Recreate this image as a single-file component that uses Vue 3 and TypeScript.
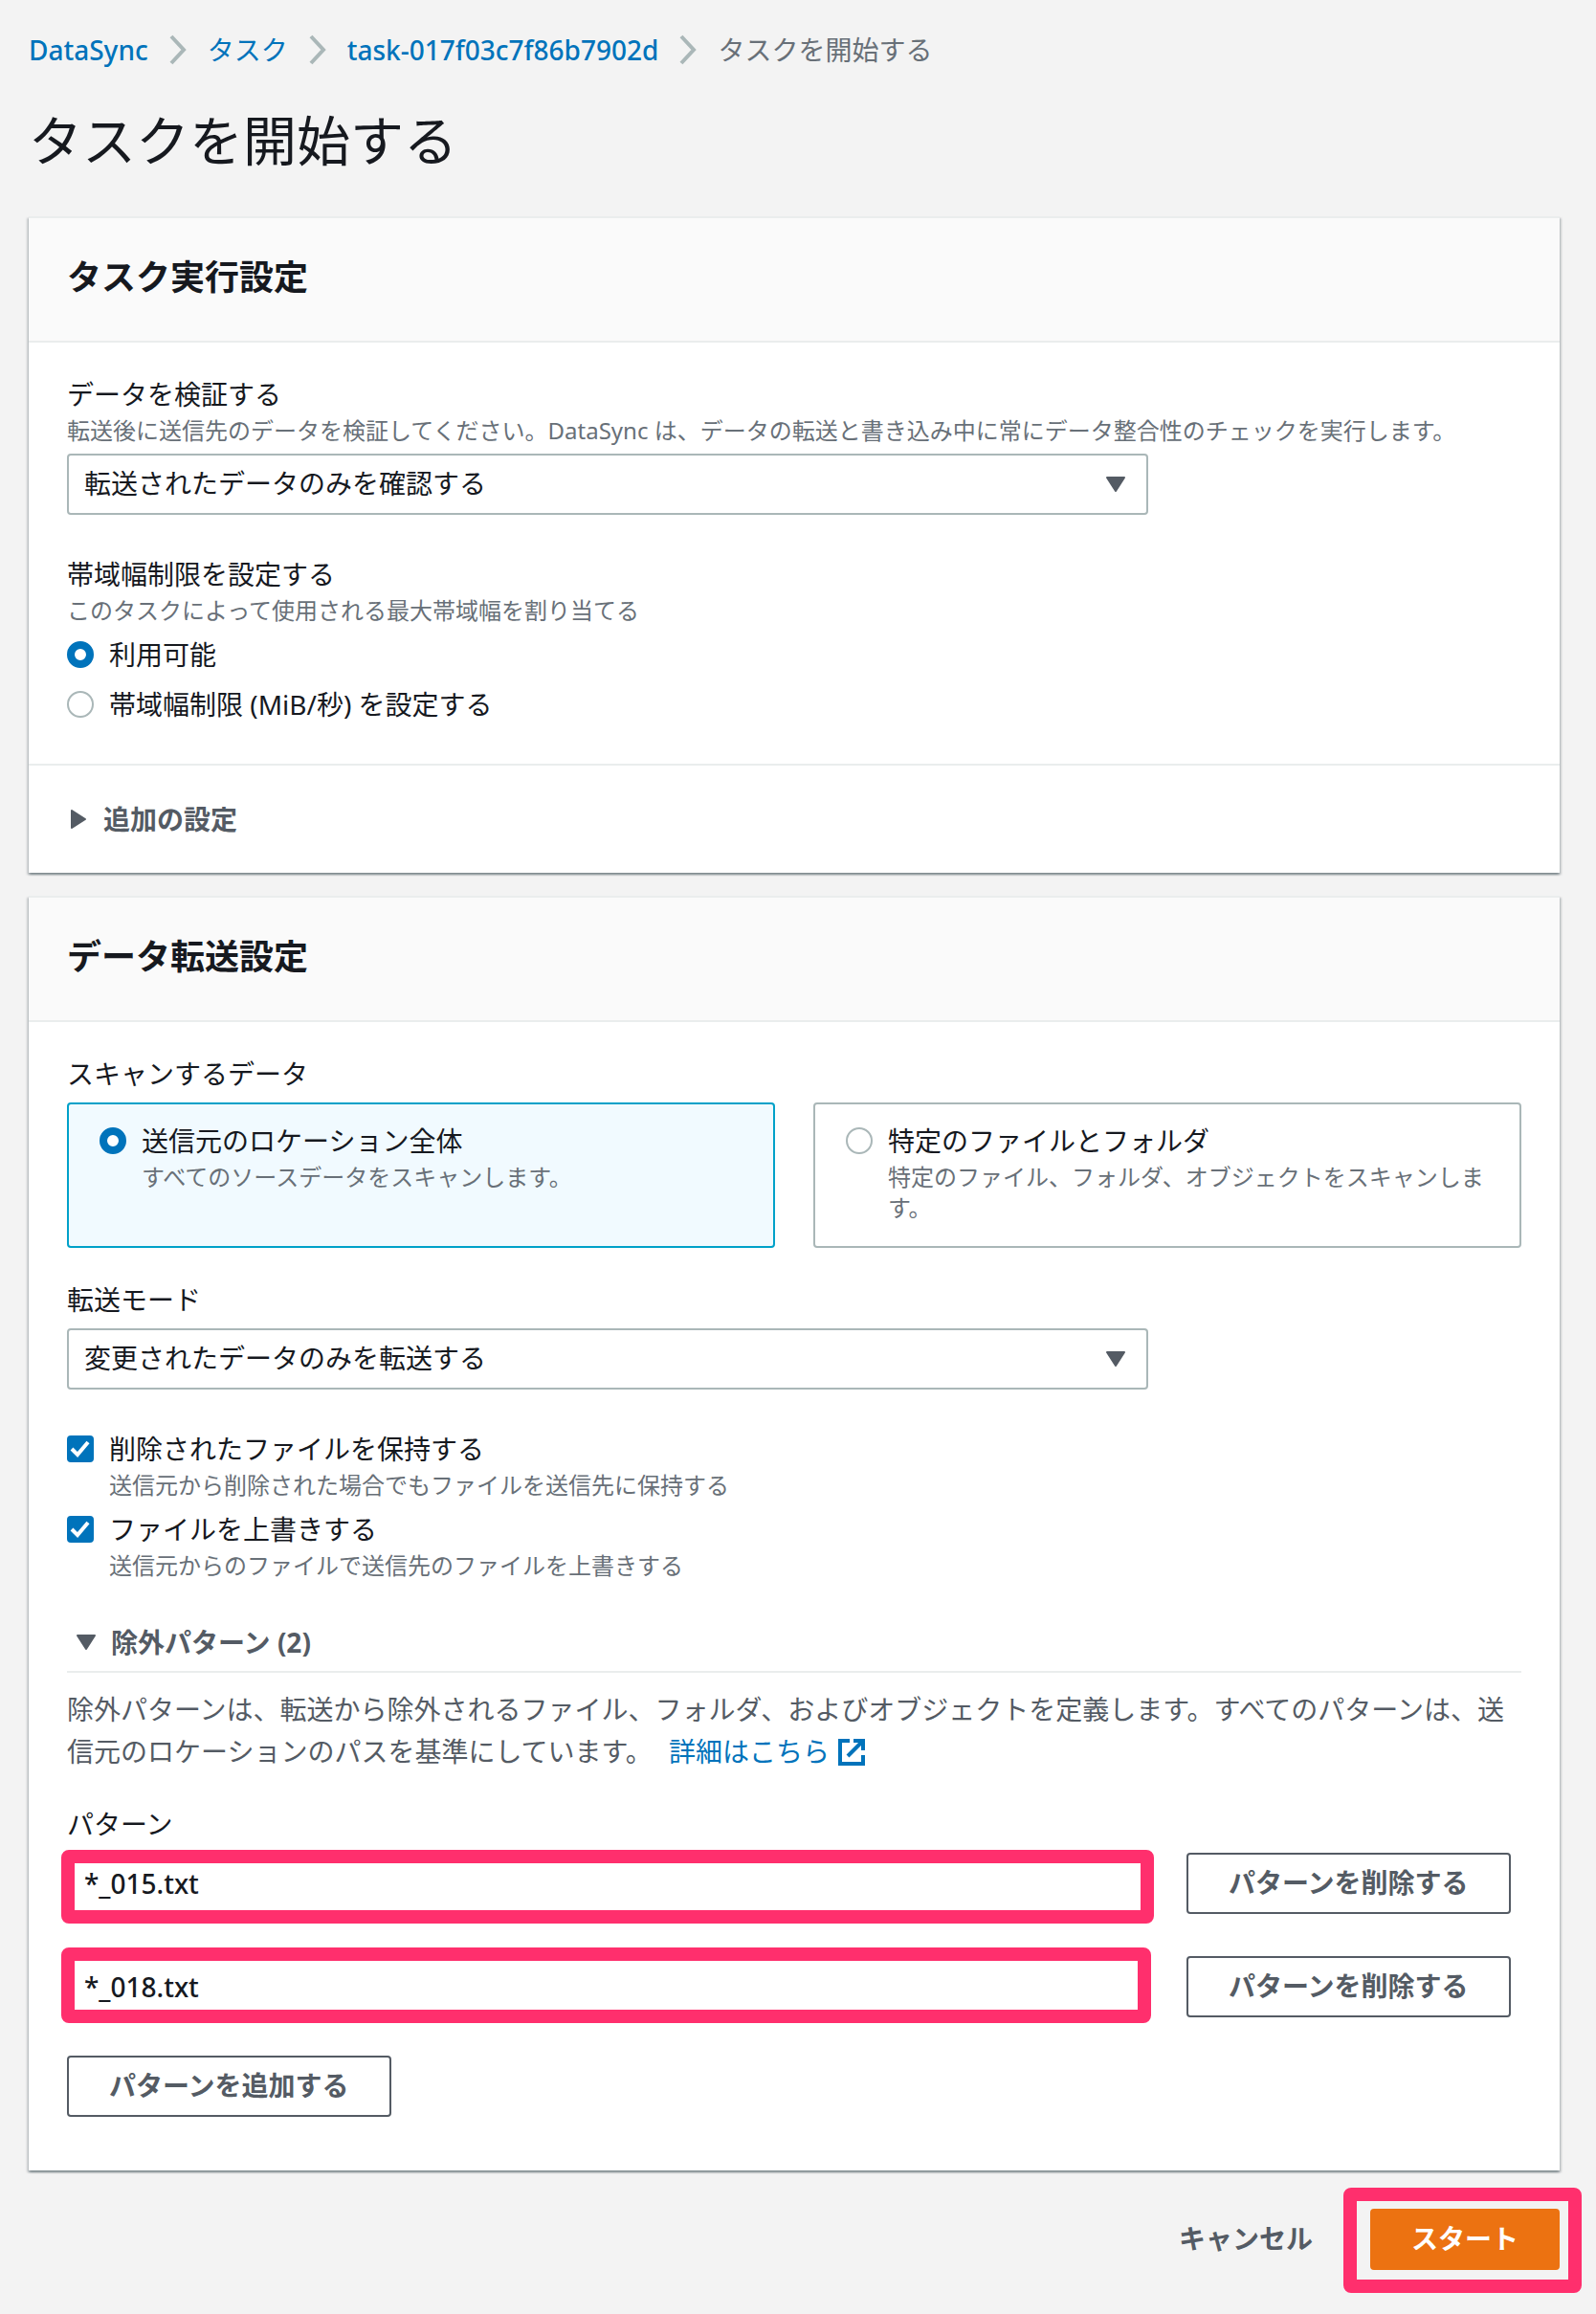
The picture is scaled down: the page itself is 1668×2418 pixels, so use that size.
<script setup lang="ts">
import { ref } from 'vue'

interface Crumb {
  label: string
  href?: string
}

interface ScanOption {
  value: string
  title: string
  description: string
}

interface CheckOption {
  id: string
  title: string
  description: string
  checked: boolean
}

interface Pattern {
  id: number
  value: string
}

const crumbs: Crumb[] = [
  { label: 'DataSync', href: '#datasync' },
  { label: 'タスク', href: '#tasks' },
  { label: 'task-017f03c7f86b7902d', href: '#task' },
  { label: 'タスクを開始する' },
]

const verifyMode = ref('transferred')
const bandwidth = ref('available')
const scanTarget = ref('all')
const transferMode = ref('changed')

const scanOptions: ScanOption[] = [
  {
    value: 'all',
    title: '送信元のロケーション全体',
    description: 'すべてのソースデータをスキャンします。',
  },
  {
    value: 'specific',
    title: '特定のファイルとフォルダ',
    description: '特定のファイル、フォルダ、オブジェクトをスキャンします。',
  },
]

const checks = ref<CheckOption[]>([
  {
    id: 'keep-deleted',
    title: '削除されたファイルを保持する',
    description: '送信元から削除された場合でもファイルを送信先に保持する',
    checked: true,
  },
  {
    id: 'overwrite',
    title: 'ファイルを上書きする',
    description: '送信元からのファイルで送信先のファイルを上書きする',
    checked: true,
  },
])

const patterns = ref<Pattern[]>([
  { id: 1, value: '*_015.txt' },
  { id: 2, value: '*_018.txt' },
])

let nextId = 3

function addPattern(): void {
  patterns.value.push({ id: nextId++, value: '' })
}

function removePattern(id: number): void {
  patterns.value = patterns.value.filter((p) => p.id !== id)
}
</script>

<template>
  <main class="page">
    <nav aria-label="パンくずリスト">
      <ol class="crumbs">
        <li v-for="(crumb, i) in crumbs" :key="crumb.label" class="crumb">
          <svg v-if="i > 0" class="chevron" viewBox="0 0 18 32" aria-hidden="true">
            <path d="M2 2 L15 16 L2 30" fill="none" stroke="#aab7b8" stroke-width="4" />
          </svg>
          <a v-if="crumb.href" :href="crumb.href">{{ crumb.label }}</a>
          <span v-else>{{ crumb.label }}</span>
        </li>
      </ol>
    </nav>

    <h1>タスクを開始する</h1>

    <section class="card">
      <header class="card-header"><h2>タスク実行設定</h2></header>
      <div class="card-body">
        <div class="field-grid">
          <label class="label wide" for="verify">データを検証する</label>
          <p class="hint wide">
            転送後に送信先のデータを検証してください。DataSync は、データの転送と書き込み中に常にデータ整合性のチェックを実行します。
          </p>
          <div class="select">
            <select id="verify" v-model="verifyMode">
              <option value="transferred">転送されたデータのみを確認する</option>
            </select>
            <svg class="arrow" viewBox="0 0 20 16" aria-hidden="true">
              <path d="M1 1 H19 L10 15 Z" fill="#545b64" stroke="#545b64" stroke-width="2" stroke-linejoin="round" />
            </svg>
          </div>
        </div>

        <fieldset class="group">
          <legend class="label">帯域幅制限を設定する</legend>
          <p class="hint">このタスクによって使用される最大帯域幅を割り当てる</p>
          <label class="choice">
            <input v-model="bandwidth" type="radio" name="bandwidth" value="available" />
            <span>利用可能</span>
          </label>
          <label class="choice">
            <input v-model="bandwidth" type="radio" name="bandwidth" value="limit" />
            <span>帯域幅制限 (MiB/秒) を設定する</span>
          </label>
        </fieldset>
      </div>
      <div class="card-footer">
        <button type="button" class="expander" aria-expanded="false">
          <svg class="side-arrow" viewBox="0 0 16 20" aria-hidden="true">
            <path d="M1 1 V19 L15 10 Z" fill="#545b64" stroke="#545b64" stroke-width="2" stroke-linejoin="round" />
          </svg>
          追加の設定
        </button>
      </div>
    </section>

    <section class="card">
      <header class="card-header"><h2>データ転送設定</h2></header>
      <div class="card-body last">
        <fieldset>
          <legend class="label">スキャンするデータ</legend>
          <div class="tiles">
            <label
              v-for="option in scanOptions"
              :key="option.value"
              class="tile"
              :class="{ selected: scanTarget === option.value }"
            >
              <input v-model="scanTarget" type="radio" name="scan" :value="option.value" />
              <span class="choice-text">
                <span class="choice-title">{{ option.title }}</span>
                <span class="hint">{{ option.description }}</span>
              </span>
            </label>
          </div>
        </fieldset>

        <div class="field-grid mode">
          <label class="label wide" for="mode">転送モード</label>
          <div class="select">
            <select id="mode" v-model="transferMode">
              <option value="changed">変更されたデータのみを転送する</option>
            </select>
            <svg class="arrow" viewBox="0 0 20 16" aria-hidden="true">
              <path d="M1 1 H19 L10 15 Z" fill="#545b64" stroke="#545b64" stroke-width="2" stroke-linejoin="round" />
            </svg>
          </div>
        </div>

        <div class="checks">
          <label v-for="check in checks" :key="check.id" class="check">
            <span class="box">
              <input v-model="check.checked" type="checkbox" :name="check.id" />
              <svg v-if="check.checked" viewBox="0 0 28 28" aria-hidden="true">
                <path d="M5 14 L11 20 L22 7" fill="none" stroke="#fff" stroke-width="4" />
              </svg>
            </span>
            <span class="choice-text">
              <span class="choice-title">{{ check.title }}</span>
              <span class="hint">{{ check.description }}</span>
            </span>
          </label>
        </div>

        <div class="expander-bar">
          <button type="button" class="expander open" aria-expanded="true">
            <svg class="down-arrow" viewBox="0 0 20 16" aria-hidden="true">
              <path d="M1 1 H19 L10 15 Z" fill="#545b64" stroke="#545b64" stroke-width="2" stroke-linejoin="round" />
            </svg>
            除外パターン ({{ patterns.length }})
          </button>
        </div>

        <p class="description">
          除外パターンは、転送から除外されるファイル、フォルダ、およびオブジェクトを定義します。すべてのパターンは、送信元のロケーションのパスを基準にしています。
          <a class="more" href="#learn-more">詳細はこちら<svg class="external" viewBox="0 0 28 28" aria-hidden="true">
              <path d="M12 2 H2 V26 H26 V17" fill="none" stroke="#0073bb" stroke-width="4" />
              <path d="M16 2 H26 V12" fill="none" stroke="#0073bb" stroke-width="4" />
              <path d="M25 3 L10 18" fill="none" stroke="#0073bb" stroke-width="4" />
            </svg></a>
        </p>

        <div class="label">パターン</div>
        <ul class="patterns">
          <li v-for="(pattern, i) in patterns" :key="pattern.id" class="pattern-row">
            <div class="input">
              <input v-model="pattern.value" type="text" :aria-label="`パターン ${i + 1}`" />
              <span v-if="i < 2" class="mark" :class="i === 0 ? 'mark-first' : 'mark-second'" aria-hidden="true"></span>
            </div>
            <button type="button" class="button" @click="removePattern(pattern.id)">パターンを削除する</button>
          </li>
        </ul>
        <button type="button" class="button" @click="addPattern">パターンを追加する</button>
      </div>
    </section>

    <footer class="actions">
      <button type="button" class="button link">キャンセル</button>
      <div class="start">
        <button type="button" class="button primary">スタート</button>
        <span class="mark mark-start" aria-hidden="true"></span>
      </div>
    </footer>
  </main>
</template>

<style>
body {
  margin: 0;
  background: #f3f3f3;
}
</style>

<style scoped>
.page {
  padding: 30px 38px 46px 30px;
  font-family: "Noto Sans", "Noto Sans CJK JP", sans-serif;
  font-size: 28px;
  line-height: 44px;
  color: #16191f;
}

.page * {
  box-sizing: border-box;
}

h1,
h2,
p,
ol,
ul,
fieldset,
legend {
  margin: 0;
  padding: 0;
  border: 0;
  list-style: none;
}

fieldset {
  min-width: 0;
}

button,
input,
select {
  margin: 0;
  font: inherit;
  color: inherit;
}

a {
  color: #0073bb;
  text-decoration: none;
}

.crumbs {
  display: flex;
  flex-wrap: wrap;
  gap: 22px;
  color: #687078;
}

.crumb {
  display: flex;
  align-items: center;
  gap: 22px;
}

.crumb a {
  font-weight: 500;
}

.crumb:nth-child(2) a {
  font-weight: 400;
}

.chevron {
  width: 18px;
  height: 32px;
}

h1 {
  margin: 36px 0 44px;
  font-size: 56px;
  line-height: 72px;
  font-weight: 400;
}

h2 {
  font-size: 36px;
  line-height: 44px;
  font-weight: 700;
}

.card {
  margin-bottom: 24px;
  background: #fff;
  border-top: 2px solid #eaeded;
  box-shadow:
    0 2px 2px 0 rgba(0, 28, 36, 0.3),
    2px 2px 2px 0 rgba(0, 28, 36, 0.15),
    -2px 2px 2px 0 rgba(0, 28, 36, 0.15);
}

.card-header {
  padding: 40px 40px 44px;
  background: #fafafa;
  border-bottom: 2px solid #eaeded;
}

.card-body {
  padding: 32px 40px 40px;
}

.card-body.last {
  padding-bottom: 56px;
}

.card-footer {
  padding: 34px 44px;
  border-top: 2px solid #eaeded;
}

.label {
  display: block;
}

.hint {
  display: block;
  font-size: 24px;
  line-height: 32px;
  color: #687078;
}

.field-grid,
.pattern-row {
  display: grid;
  grid-template-columns: repeat(4, 1fr);
  column-gap: 40px;
}

.wide {
  grid-column: 1 / -1;
}

.select {
  position: relative;
  grid-column: span 3;
  margin-top: 8px;
}

.select select {
  display: block;
  width: 100%;
  height: 64px;
  padding: 0 60px 2px 16px;
  appearance: none;
  background: #fff;
  border: 2px solid #aab7b8;
  border-radius: 4px;
}

.arrow {
  position: absolute;
  top: 24px;
  right: 24px;
  width: 20px;
  height: 16px;
  pointer-events: none;
}

.group {
  margin-top: 40px;
}

.choice {
  display: flex;
  align-items: center;
  gap: 16px;
  margin-top: 8px;
}

input[type="radio"],
input[type="checkbox"] {
  flex: none;
  width: 28px;
  height: 28px;
  appearance: none;
  background: #fff;
  border: 2px solid #aab7b8;
}

input[type="radio"] {
  border-radius: 50%;
}

input[type="radio"]:checked {
  border: 8px solid #0073bb;
}

input[type="checkbox"] {
  border-radius: 4px;
}

input[type="checkbox"]:checked {
  background: #0073bb;
  border-color: #0073bb;
}

.expander {
  display: flex;
  align-items: center;
  gap: 18px;
  padding: 0;
  font-weight: 700;
  color: #545b64;
  background: none;
  border: 0;
}

.expander.open {
  gap: 16px;
}

.side-arrow {
  width: 16px;
  height: 20px;
}

.down-arrow {
  width: 20px;
  height: 16px;
}

.tiles {
  display: grid;
  grid-template-columns: repeat(2, 1fr);
  gap: 40px;
  margin-top: 8px;
}

.tile {
  display: flex;
  gap: 16px;
  padding: 16px 32px 24px;
  background: #fff;
  border: 2px solid #aab7b8;
  border-radius: 4px;
}

.tile.selected {
  background: #f1faff;
  border-color: #00a1c9;
}

.tile input {
  margin-top: 8px;
}

.choice-title {
  display: block;
}

.mode {
  margin-top: 32px;
}

.checks {
  display: flex;
  flex-direction: column;
  gap: 8px;
  margin-top: 40px;
}

.check {
  display: flex;
  gap: 16px;
}

.box {
  display: grid;
  width: 28px;
  height: 28px;
  margin-top: 8px;
}

.box > * {
  grid-area: 1 / 1;
}

.box svg {
  pointer-events: none;
}

.expander-bar {
  margin-top: 42px;
  padding: 0 10px 8px;
  border-bottom: 2px solid #eaeded;
}

.description {
  margin: 16px 0 32px;
  color: #545b64;
}

.more {
  margin-left: 10px;
}

.external {
  width: 28px;
  height: 28px;
  margin-left: 9px;
  vertical-align: -4px;
}

.patterns {
  display: flex;
  flex-direction: column;
  gap: 44px;
  margin: 8px 0 40px;
}

.input {
  position: relative;
  grid-column: span 3;
}

.input input {
  display: block;
  width: 100%;
  height: 64px;
  padding: 0 16px;
  font-weight: 500;
  background: #fff;
  border: 2px solid #aab7b8;
  border-radius: 4px;
}

.button {
  height: 64px;
  padding: 0 42px 2px;
  justify-self: start;
  font-weight: 700;
  white-space: nowrap;
  color: #545b64;
  background: #fff;
  border: 2px solid #545b64;
  border-radius: 4px;
}

.button.link {
  background: transparent;
  border-color: transparent;
}

.button.primary {
  padding: 0 41px 2px;
  color: #fff;
  background: #ec7211;
  border-color: #ec7211;
}

.actions {
  display: flex;
  justify-content: flex-end;
  gap: 16px;
  margin-top: 40px;
}

.start {
  position: relative;
}

/* Highlight frames drawn over the controls to fill in or press */
.mark {
  position: absolute;
  border: 14px solid #ff2f6d;
  border-radius: 8px;
  pointer-events: none;
}

.mark-first {
  inset: -3px -6px -10px;
}

.mark-second {
  inset: -9px -3px -6px -6px;
}

.mark-start {
  inset: -22px -23px -24px -28px;
}
</style>
